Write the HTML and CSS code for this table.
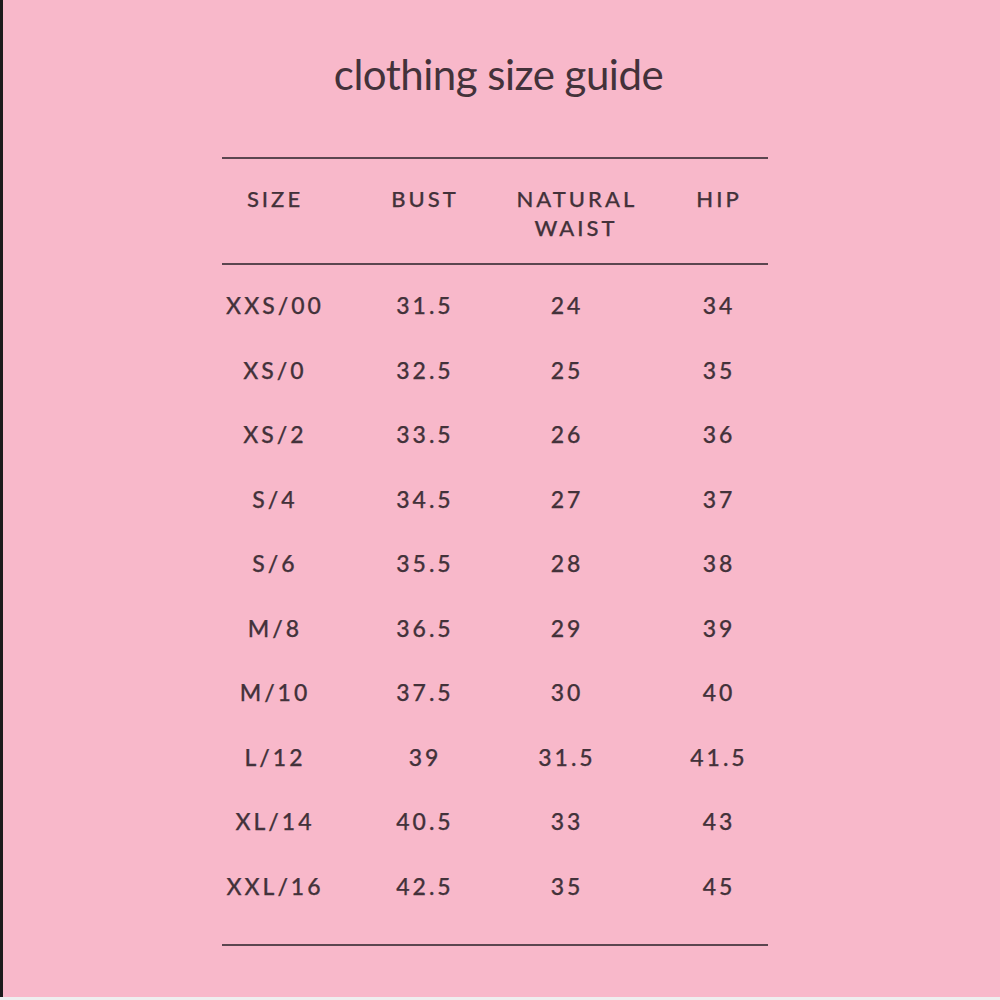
FILE: index.html
```html
<!DOCTYPE html>
<html lang="en">
<head>
<meta charset="utf-8">
<title>clothing size guide</title>
<link rel="stylesheet" href="styles.css">
</head>
<body>
<main class="page">
  <h1 class="title">clothing size guide</h1>
  <section class="chart">
    <hr class="rule">
    <div class="row head">
      <div class="cell">SIZE</div>
      <div class="cell">BUST</div>
      <div class="cell">NATURAL<br>WAIST</div>
      <div class="cell">HIP</div>
    </div>
    <hr class="rule">
    <div class="body">
      <div class="row"><div class="cell">XXS/00</div><div class="cell">31.5</div><div class="cell">24</div><div class="cell">34</div></div>
      <div class="row"><div class="cell">XS/0</div><div class="cell">32.5</div><div class="cell">25</div><div class="cell">35</div></div>
      <div class="row"><div class="cell">XS/2</div><div class="cell">33.5</div><div class="cell">26</div><div class="cell">36</div></div>
      <div class="row"><div class="cell">S/4</div><div class="cell">34.5</div><div class="cell">27</div><div class="cell">37</div></div>
      <div class="row"><div class="cell">S/6</div><div class="cell">35.5</div><div class="cell">28</div><div class="cell">38</div></div>
      <div class="row"><div class="cell">M/8</div><div class="cell">36.5</div><div class="cell">29</div><div class="cell">39</div></div>
      <div class="row"><div class="cell">M/10</div><div class="cell">37.5</div><div class="cell">30</div><div class="cell">40</div></div>
      <div class="row"><div class="cell">L/12</div><div class="cell">39</div><div class="cell">31.5</div><div class="cell">41.5</div></div>
      <div class="row"><div class="cell">XL/14</div><div class="cell">40.5</div><div class="cell">33</div><div class="cell">43</div></div>
      <div class="row"><div class="cell">XXL/16</div><div class="cell">42.5</div><div class="cell">35</div><div class="cell">45</div></div>
    </div>
    <hr class="rule">
  </section>
</main>
</body>
</html>
```

FILE: styles.css
```css
* { box-sizing: border-box; }

html, body {
  margin: 0;
  padding: 0;
  height: 1000px;
  background: #efeeef;
}

body {
  font-family: "Lato", "Liberation Sans", sans-serif;
  color: #43323a;
}

.page {
  height: 997px;
  background: #f8b8ca;
  border-left: 3px solid #1c1a1b;
  display: flex;
  flex-direction: column;
  align-items: center;
  padding-top: 44px;
}

.title {
  margin: 0;
  font-size: 42px;
  font-weight: 400;
  line-height: 60px;
  letter-spacing: -0.5px;
  transform: translateX(-3px);
}

.chart {
  width: 596px;
  margin-top: 53px;
}

.rule {
  margin: 0 32px 0 18px;
  border: 0;
  height: 2px;
  background: #5b4650;
}

.row {
  display: grid;
  grid-template-columns: 140px 160px 132px 164px;
  height: 64.5px;
  align-items: center;
  font-size: 23px;
  font-weight: 500;
  letter-spacing: 3px;
  -webkit-text-stroke: 0.25px #43323a;
}

.cell {
  text-align: center;
  padding-left: 3px;
}

.body .cell:nth-child(3) {
  padding-left: 0;
  padding-right: 5px;
}

.row.head {
  height: auto;
  align-items: start;
  padding: 25px 0 21px;
  line-height: 29px;
  font-size: 22px;
}

.row.head .cell:nth-child(3) {
  padding-left: 13px;
}

.body {
  padding: 8px 0 26px;
}
```
